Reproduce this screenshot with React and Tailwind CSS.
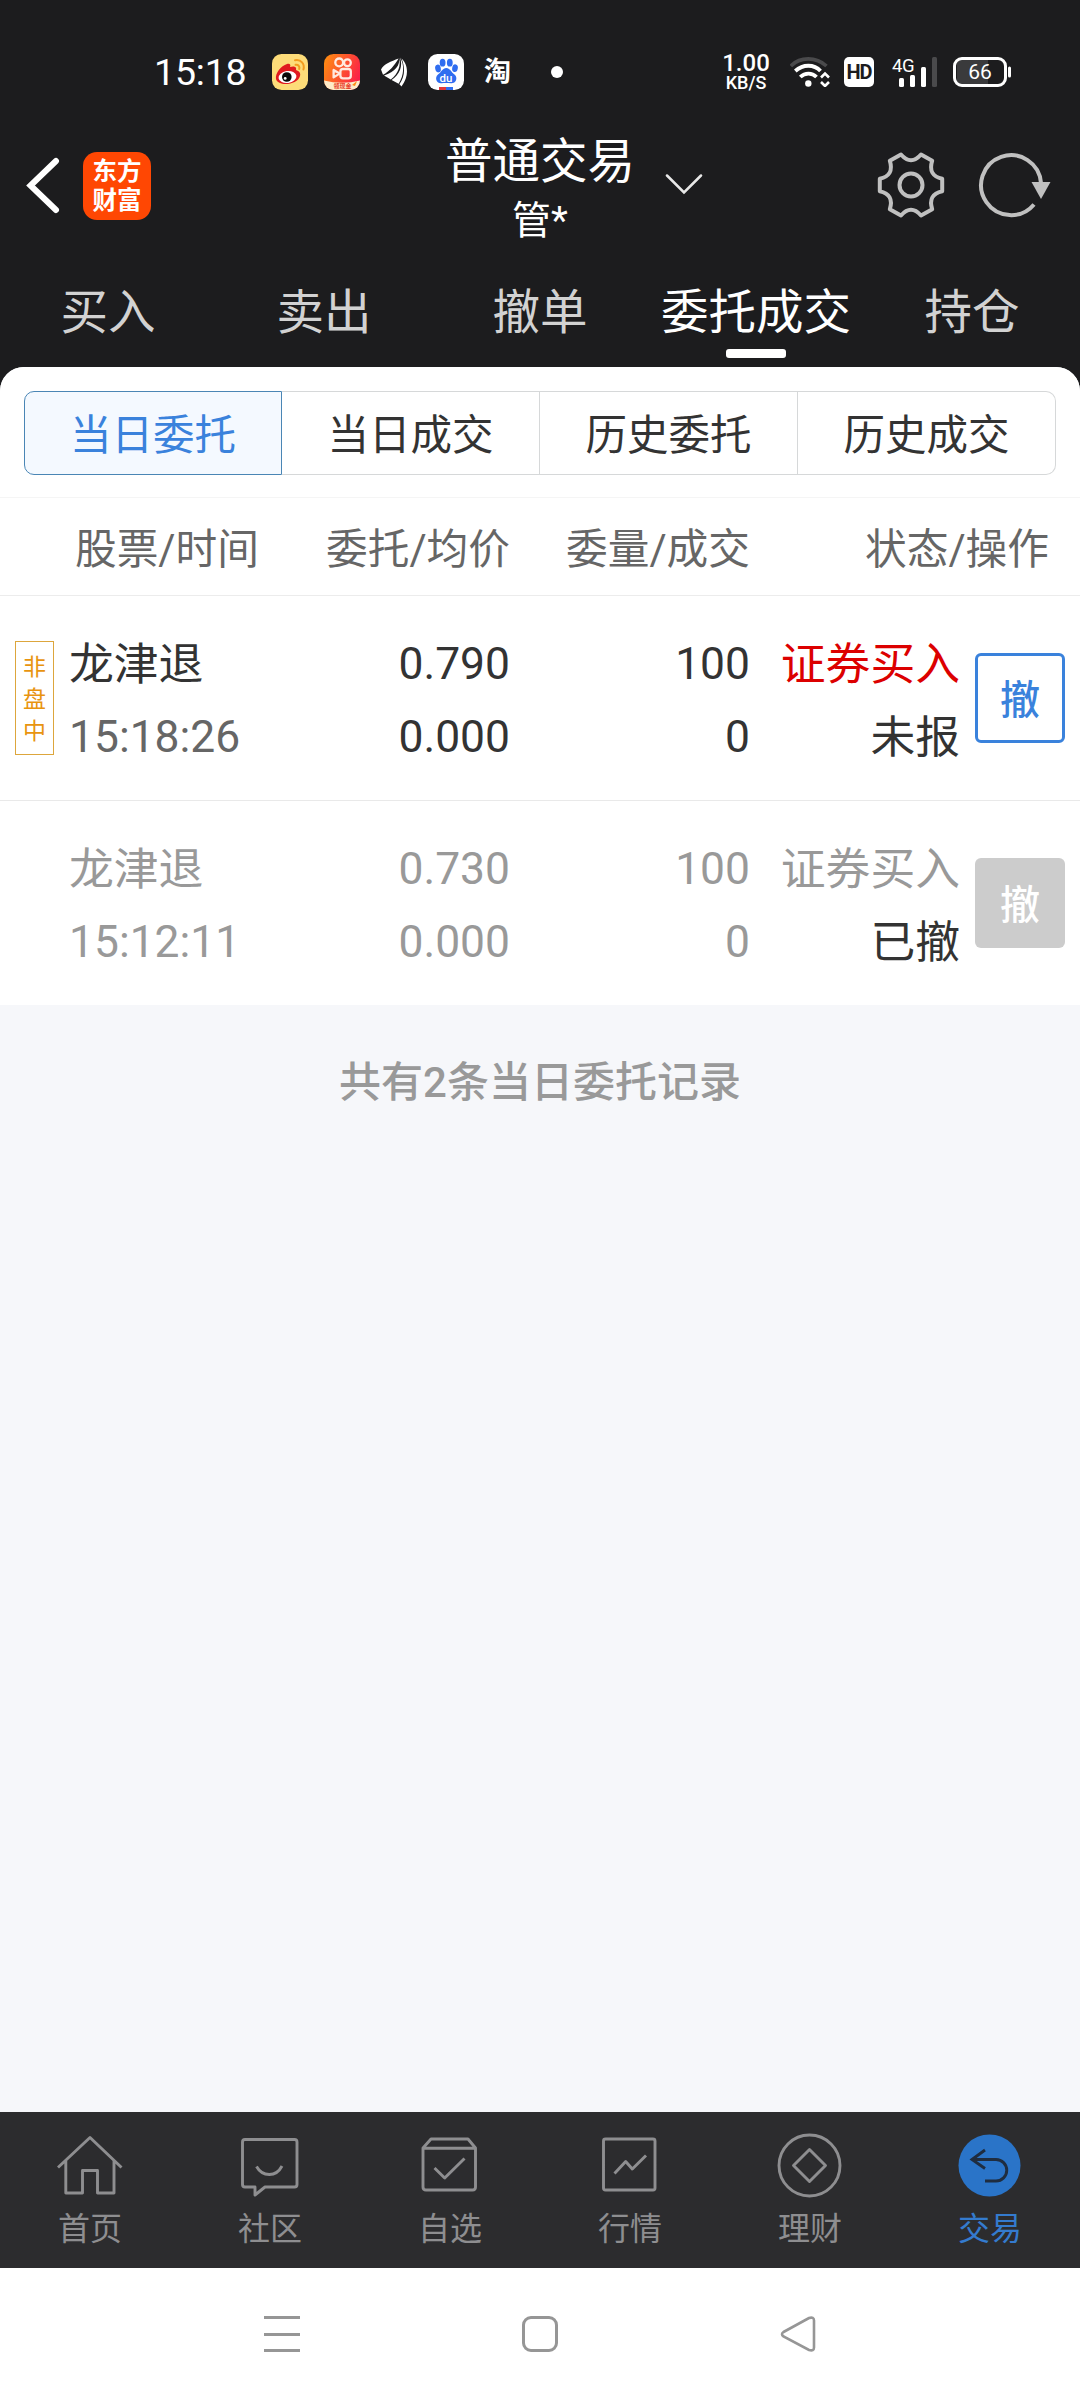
import React from "react";

const GEAR =
  "M-10 -30.5Q0 -19 10 -30.5L21.2 -24.3Q16.5 -9.5 31.2 -6.2L31.2 6.2Q16.5 9.5 21.2 24.3L10 30.5Q0 19 -10 30.5L-21.2 24.3Q-16.5 9.5 -31.2 6.2L-31.2 -6.2Q-16.5 -9.5 -21.2 -24.3Z";

function WeiboIcon() {
  return (
    <svg className="ml-[28px] h-9 w-9" viewBox="0 0 36 36">
      <rect width="36" height="36" rx="9.5" fill="#fddc79" />
      <path d="M4 25C3 19 9 12 15 10C18 9 19 11 18 13C21 12 25 12 24 16C27 17 29 19 28 22C26 31 6 33 4 25Z" fill="#e01a1f" />
      <ellipse cx="15.5" cy="23" rx="9" ry="6" fill="#fff" transform="rotate(-8 15.5 23)" />
      <circle cx="14.8" cy="23" r="4.8" fill="#0b0b0b" />
      <circle cx="13.2" cy="24.4" r="1.4" fill="#fff" />
      <path d="M23 6.2C29 5 33 10 31.4 15.5M23.6 10.8C26.4 10.4 28 12.6 27.2 15" fill="none" stroke="#f29c1f" strokeWidth="2" strokeLinecap="round" />
    </svg>
  );
}

function VideoIcon() {
  return (
    <svg className="ml-4 h-9 w-9" viewBox="0 0 36 36">
      <defs>
        <linearGradient id="vg" x1="0" y1="0.2" x2="1" y2="0.6">
          <stop offset="0" stopColor="#ff8a12" />
          <stop offset="1" stopColor="#fb2048" />
        </linearGradient>
        <clipPath id="vc">
          <rect width="36" height="36" rx="9.5" />
        </clipPath>
      </defs>
      <g clipPath="url(#vc)">
        <rect width="36" height="36" fill="url(#vg)" />
        <g fill="none" stroke="#ffe9e0" strokeWidth="2.3">
          <circle cx="15.2" cy="8.4" r="3.9" />
          <circle cx="23.4" cy="8.8" r="3.4" />
          <rect x="16.4" y="15" width="10.4" height="9.4" rx="2.6" />
          <path d="M15.6 19.6L9.6 16V23.4Z" strokeLinejoin="round" />
        </g>
        <path d="M0 26.6Q18 31 36 26.6V36H0Z" fill="#fdebc9" />
        <path d="M28 31L33 27L31 32Z" fill="#ff8a12" />
        <text x="18.5" y="34.2" textAnchor="middle" fontSize="6" fontWeight="700" fill="#e8402a" fontFamily="'Noto Sans CJK SC', sans-serif">领现金</text>
      </g>
    </svg>
  );
}

function SailIcon() {
  return (
    <svg className="ml-[21px] h-[30px] w-[27px]" viewBox="0 0 27 30" fill="#fff">
      <path d="M0 12.5C3 6.500 10 4.500 17.600 1.400C13 9 8.500 14 2 17.800Z" />
      <path d="M18 0.400C19.500 8 14 15 3 18.400L9.800 22.400C17.400 16.500 20.200 8.500 18 0.400Z" />
      <path d="M19 0.400C22 9 19 17 10.600 23L17.600 26.800C23 18 23.800 8 19 0.400Z" />
      <path d="M20.600 1.500C26.500 7 29 18 20.500 29.500L18.400 27.200C23.800 20 24.400 11 20.600 1.500Z" />
    </svg>
  );
}

function PawIcon() {
  return (
    <svg className="ml-[20px] h-9 w-9" viewBox="0 0 36 36">
      <rect width="36" height="36" rx="9.5" fill="#fff" />
      <g fill="#2f6df0">
        <ellipse cx="10" cy="14.5" rx="2.8" ry="3.9" transform="rotate(-12 10 14.5)" />
        <ellipse cx="14.6" cy="8.7" rx="2.9" ry="3.9" />
        <ellipse cx="21.8" cy="8.7" rx="2.9" ry="3.9" />
        <ellipse cx="27" cy="14.2" rx="2.8" ry="3.9" transform="rotate(12 27 14.2)" />
        <path d="M18.3 14C22 14 23 18 26.5 20.5C30.5 24 27.5 29.8 23 29.3C20 29 16.5 29 13.5 29.3C9 29.8 6 24 10 20.5C13.5 18 14.6 14 18.3 14Z" />
      </g>
      <text x="18" y="27.6" textAnchor="middle" fontSize="11.5" fontWeight="500" fill="#fff" fontFamily="Roboto, sans-serif">du</text>
      <path d="M11 33h7v3h-7z" fill="#e0393c" />
      <path d="M18 33h7v3h-7z" fill="#2f6df0" />
    </svg>
  );
}

function StatusBar() {
  return (
    <div className="flex h-[120px] items-center justify-between pt-6 pr-[69px] pl-[154px] text-white">
      <div className="flex items-center">
        <span className="w-[90px] text-[37.5px] leading-[48px] tracking-[-0.2px] whitespace-nowrap">15:18</span>
        <WeiboIcon />
        <VideoIcon />
        <SailIcon />
        <PawIcon />
        <span className="ml-[20px] w-[28px] text-[27px] leading-9 font-bold">淘</span>
        <span className="ml-[39px] h-3 w-3 rounded-full bg-white" />
      </div>
      <div className="flex items-center">
        <div className="w-[50px] text-center font-medium">
          <div className="text-[24px] leading-[21px]">1.00</div>
          <div className="text-[18px] leading-[17px]">KB/S</div>
        </div>
        <svg className="ml-[19px] h-[30px] w-[40px]" viewBox="0 0 40 30" fill="none" strokeWidth="3.6">
          <path d="M0.8 9C10 -0.500 26 -0.500 36.500 9" stroke="#4a4a4c" />
          <path d="M5.3 14C13 7 24 7 30.500 14" stroke="#fff" strokeWidth="3.8" />
          <path d="M10.3 20C15 15.500 22 15.500 26.500 20" stroke="#fff" strokeWidth="3.8" />
          <circle cx="18.3" cy="26.5" r="3.2" fill="#fff" />
          <path d="M31 20.500L35 16.500L39 20.500M31 25L35 29L39 25" stroke="#fff" strokeWidth="2.6" />
        </svg>
        <span className="ml-[14px] flex h-[30px] w-[30px] items-center justify-center rounded-[5px] bg-white text-[20px] leading-none font-bold tracking-[-1px] text-[#1c1c1e]">HD</span>
        <svg className="ml-[18px] h-[30px] w-[46px] overflow-visible" viewBox="0 0 46 30" fill="#fff">
          <text x="0" y="15" fontSize="18.5" letterSpacing="-0.5" fontFamily="Roboto, sans-serif">4G</text>
          <rect x="7" y="21" width="5" height="9" rx="1.5" />
          <rect x="18" y="18" width="5" height="12" rx="1.5" />
          <rect x="29" y="10" width="5" height="20" rx="1.5" />
          <rect x="40" y="0" width="5" height="30" rx="1.5" fill="#4a4a4c" />
        </svg>
        <svg className="ml-[15px] h-[30px] w-[58px]" viewBox="0 0 58 30">
          <rect x="4" y="3" width="31" height="24" fill="#3a3a3c" />
          <rect x="1.5" y="1.5" width="51" height="27" rx="7.5" fill="none" stroke="#fff" strokeWidth="3" />
          <rect x="55" y="9.5" width="3" height="11" rx="1.5" fill="#fff" />
          <text x="27" y="22.3" textAnchor="middle" fontSize="21" fill="#fff" fontFamily="Roboto, sans-serif">66</text>
        </svg>
      </div>
    </div>
  );
}

function Header() {
  return (
    <div className="grid h-[132px] grid-cols-[440px_200px_440px] text-white">
      <div className="flex h-[132px] items-center pl-[26px]">
        <svg className="h-[58px] w-[34px]" viewBox="0 0 34 58" fill="none" stroke="#fff" strokeWidth="6" strokeLinecap="round">
          <path d="M30 4L4.5 28.500L30 53" />
        </svg>
        <span className="ml-[23px] flex h-[68px] w-[68px] flex-col items-center justify-center rounded-[14px] bg-[#ff4703] text-[24.5px] leading-[29px] font-bold">
          <span>东方</span>
          <span>财富</span>
        </span>
      </div>
      <div className="flex flex-col items-center pt-[10px] whitespace-nowrap">
        <span className="text-[47.5px] leading-[64px]">普通交易</span>
        <span className="text-[39px] leading-[54px]">管*</span>
      </div>
      <div className="flex h-[132px] items-center pb-[2px]">
        <svg className="ml-[25px] h-[22px] w-[38px]" viewBox="0 0 38 22" fill="none" stroke="#e8e8e8" strokeWidth="2.5" strokeLinecap="round">
          <path d="M2 1.500L19 18.500L36 1.500" />
        </svg>
        <svg className="ml-[174px] h-[68px] w-[68px]" viewBox="-34 -34 68 68" fill="none" stroke="#c0c0c0" strokeWidth="4" strokeLinejoin="round">
          <path d={GEAR} />
          <circle r="11.5" />
        </svg>
        <svg className="ml-[32px] h-[68px] w-[74px]" viewBox="0 0 74 68" fill="none" stroke="#c0c0c0" strokeWidth="4">
          <path d="M57 53.500A30 30 0 1 1 64 32" />
          <path d="M54.500 31H73.500L64 48Z" fill="#c0c0c0" stroke="none" />
        </svg>
      </div>
    </div>
  );
}

const TABS = ["买入", "卖出", "撤单", "委托成交", "持仓"];

function Tabs() {
  return (
    <div className="grid h-[115px] grid-cols-5">
      {TABS.map((t) => {
        const on = t === "委托成交";
        return (
          <div key={t} className={"flex flex-col items-center pt-[29px] " + (on ? "text-white" : "text-[#d2d2d2]")}>
            <span className="text-[47.5px] leading-[64px] whitespace-nowrap">{t}</span>
            {on && <span className="mt-[4px] h-[9px] w-[60px] rounded-[3px] bg-white" />}
          </div>
        );
      })}
    </div>
  );
}

function Segments() {
  const base = "flex w-[258px] items-center justify-center border pt-[5px] text-[41.5px] leading-[60px] ";
  return (
    <div className="flex h-[131px] border-b border-[#f5f5f5] px-6 pt-6 pb-[22px] text-[#333]">
      <div className={base + "rounded-l-[10px] border-[#4a86b5] bg-[#f4f9ff] text-[#3a82dc]"}>当日委托</div>
      <div className={base + "border-l-0 border-[#d6d8d9]"}>当日成交</div>
      <div className={base + "border-l-0 border-[#d6d8d9]"}>历史委托</div>
      <div className={base + "rounded-r-[10px] border-l-0 border-[#d6d8d9]"}>历史成交</div>
    </div>
  );
}

function ColumnHeads() {
  return (
    <div className="grid h-[98px] grid-cols-[270px_240px_240px_299px] items-center border-b border-[#ececec] pt-[6px] text-[41.7px] leading-[60px] text-[#666]">
      <span className="pl-[75px]">股票/时间</span>
      <span className="text-right">委托/均价</span>
      <span className="text-right">委量/成交</span>
      <span className="text-right">状态/操作</span>
    </div>
  );
}

const ORDERS = [
  { name: "龙津退", time: "15:18:26", price: "0.790", avg: "0.000", qty: "100", done: "0", side: "证券买入", state: "未报", live: true },
  { name: "龙津退", time: "15:12:11", price: "0.730", avg: "0.000", qty: "100", done: "0", side: "证券买入", state: "已撤", live: false },
];

function OrderRow({ o }) {
  return (
    <div
      className={
        "grid grid-cols-[70px_200px_240px_240px_210px_120px] text-[44.8px] leading-[73px] " +
        (o.live ? "h-[205px] border-b border-[#e9e9e9] text-[#333]" : "h-[204px] text-[#999]")
      }
    >
      <div className="pt-[45px] pl-[15px]">
        {o.live && (
          <div className="flex h-[114px] w-[39px] flex-col items-center justify-center border border-[#dda63c] pt-[3px] text-[23px] leading-[32px] text-[#e8940f]">
            <span>非</span>
            <span>盘</span>
            <span>中</span>
          </div>
        )}
      </div>
      <div className="-ml-px pt-[32px]">
        <div>{o.name}</div>
        <div className={o.live ? "text-[44.4px] text-[#666]" : "text-[44.4px]"}>{o.time}</div>
      </div>
      <div className="pt-[32px] text-right text-[44.4px]">
        <div>{o.price}</div>
        <div>{o.avg}</div>
      </div>
      <div className="pt-[32px] text-right text-[44.4px]">
        <div>{o.qty}</div>
        <div>{o.done}</div>
      </div>
      <div className="pt-[32px] text-right">
        <div className={o.live ? "text-[#dc0000]" : ""}>{o.side}</div>
        <div className="text-[#333]">{o.state}</div>
      </div>
      <div className="pt-[57px] pl-[15px]">
        <div
          className={
            "flex h-[90px] w-[90px] items-center justify-center rounded-[6px] text-[40px] leading-[60px] font-medium " +
            (o.live ? "border-[3px] border-[#3a82dc] text-[#3a82dc]" : "bg-[#ccc] text-white")
          }
        >
          <span className="pt-[6px]">撤</span>
        </div>
      </div>
    </div>
  );
}

const NAV = [
  { label: "首页", art: <path d="M4 37.500L36 7.500L67.500 37.500M11.800 31V63H28.500V40.500H43.500V63H60V31" /> },
  { label: "社区", art: <path d="M11 9.500H60.500Q63 9.500 63 12V54.500Q63 57 60.500 57H31L21 65V57H11Q8.500 57 8.500 54.500V12Q8.500 9.500 11 9.500ZM22.500 36.500Q27 44.500 35.300 44.500T48 36" /> },
  { label: "自选", art: <path d="M9 18V57Q9 60 12 60H58.500Q61.500 60 61.500 57V18L54 9H17ZM9 18.300H61.500M20.500 38L30.700 48L50.500 28.500" /> },
  { label: "行情", art: <path d="M11.500 9H59Q61 9 61 11V58Q61 60 59 60H11.500Q9.500 60 9.500 58V11Q9.500 9 11.500 9ZM20.500 43.500L31.700 31.500L38.300 39L52 25.500" /> },
  { label: "理财", art: (<><circle cx="35.5" cy="35.5" r="30.5" /><path d="M35.500 19.500L51.500 35.500L35.500 51.500L19.500 35.500Z" /></>) },
  { label: "交易", on: true, art: (<><circle cx="35.5" cy="35.5" r="31" fill="#2a74c8" stroke="none" /><path d="M31 20L18 29.500L31 38.500M18 29.500H42A10.750 10.750 0 0 1 42 51H31" stroke="#1f2d40" strokeLinejoin="miter" /></>) },
];

function BottomBar() {
  return (
    <div className="grid h-[156px] grid-cols-6 bg-[#2c2c2e]">
      {NAV.map((n) => (
        <div key={n.label} className={"flex flex-col items-center pt-[18px] " + (n.on ? "text-[#347bce]" : "text-[#8e8e90]")}>
          <svg className="h-[72px] w-[72px]" viewBox="0 0 72 72" fill="none" stroke="#8e8e90" strokeWidth="2.9" strokeLinejoin="round">
            {n.art}
          </svg>
          <span className="mt-[5px] text-[32px] leading-[44px]">{n.label}</span>
        </div>
      ))}
    </div>
  );
}

function SystemNav() {
  return (
    <div className="flex h-[132px] items-center bg-white pl-[264px]">
      <div className="flex h-9 w-9 flex-col justify-between">
        <span className="h-[3px] bg-[#969696]" />
        <span className="h-[3px] bg-[#969696]" />
        <span className="h-[3px] bg-[#969696]" />
      </div>
      <div className="ml-[222px] h-9 w-9 rounded-[9px] border-[3px] border-[#969696]" />
      <svg className="ml-[222px] h-9 w-9" viewBox="0 0 36 36" fill="none" stroke="#969696" strokeWidth="2.6">
        <path d="M3.500 16L29 2Q34 0.500 34 4.500V31.500Q34 35.500 29 34L3.500 20.500Q0.500 18 3.500 16Z" />
      </svg>
    </div>
  );
}

export default function App() {
  return (
    <div className="flex h-[2400px] w-[1080px] flex-col overflow-hidden bg-[#1c1c1e] font-[Roboto,'Noto_Sans_CJK_SC',sans-serif]">
      <StatusBar />
      <Header />
      <Tabs />
      <main className="flex-1 overflow-hidden rounded-t-[24px] bg-[#f6f7fa]">
        <div className="bg-white">
          <Segments />
          <ColumnHeads />
          {ORDERS.map((o) => (
            <OrderRow key={o.time} o={o} />
          ))}
        </div>
        <p className="pt-[48px] text-center text-[42px] leading-[60px] font-medium text-[#999]">共有2条当日委托记录</p>
      </main>
      <BottomBar />
      <SystemNav />
    </div>
  );
}
